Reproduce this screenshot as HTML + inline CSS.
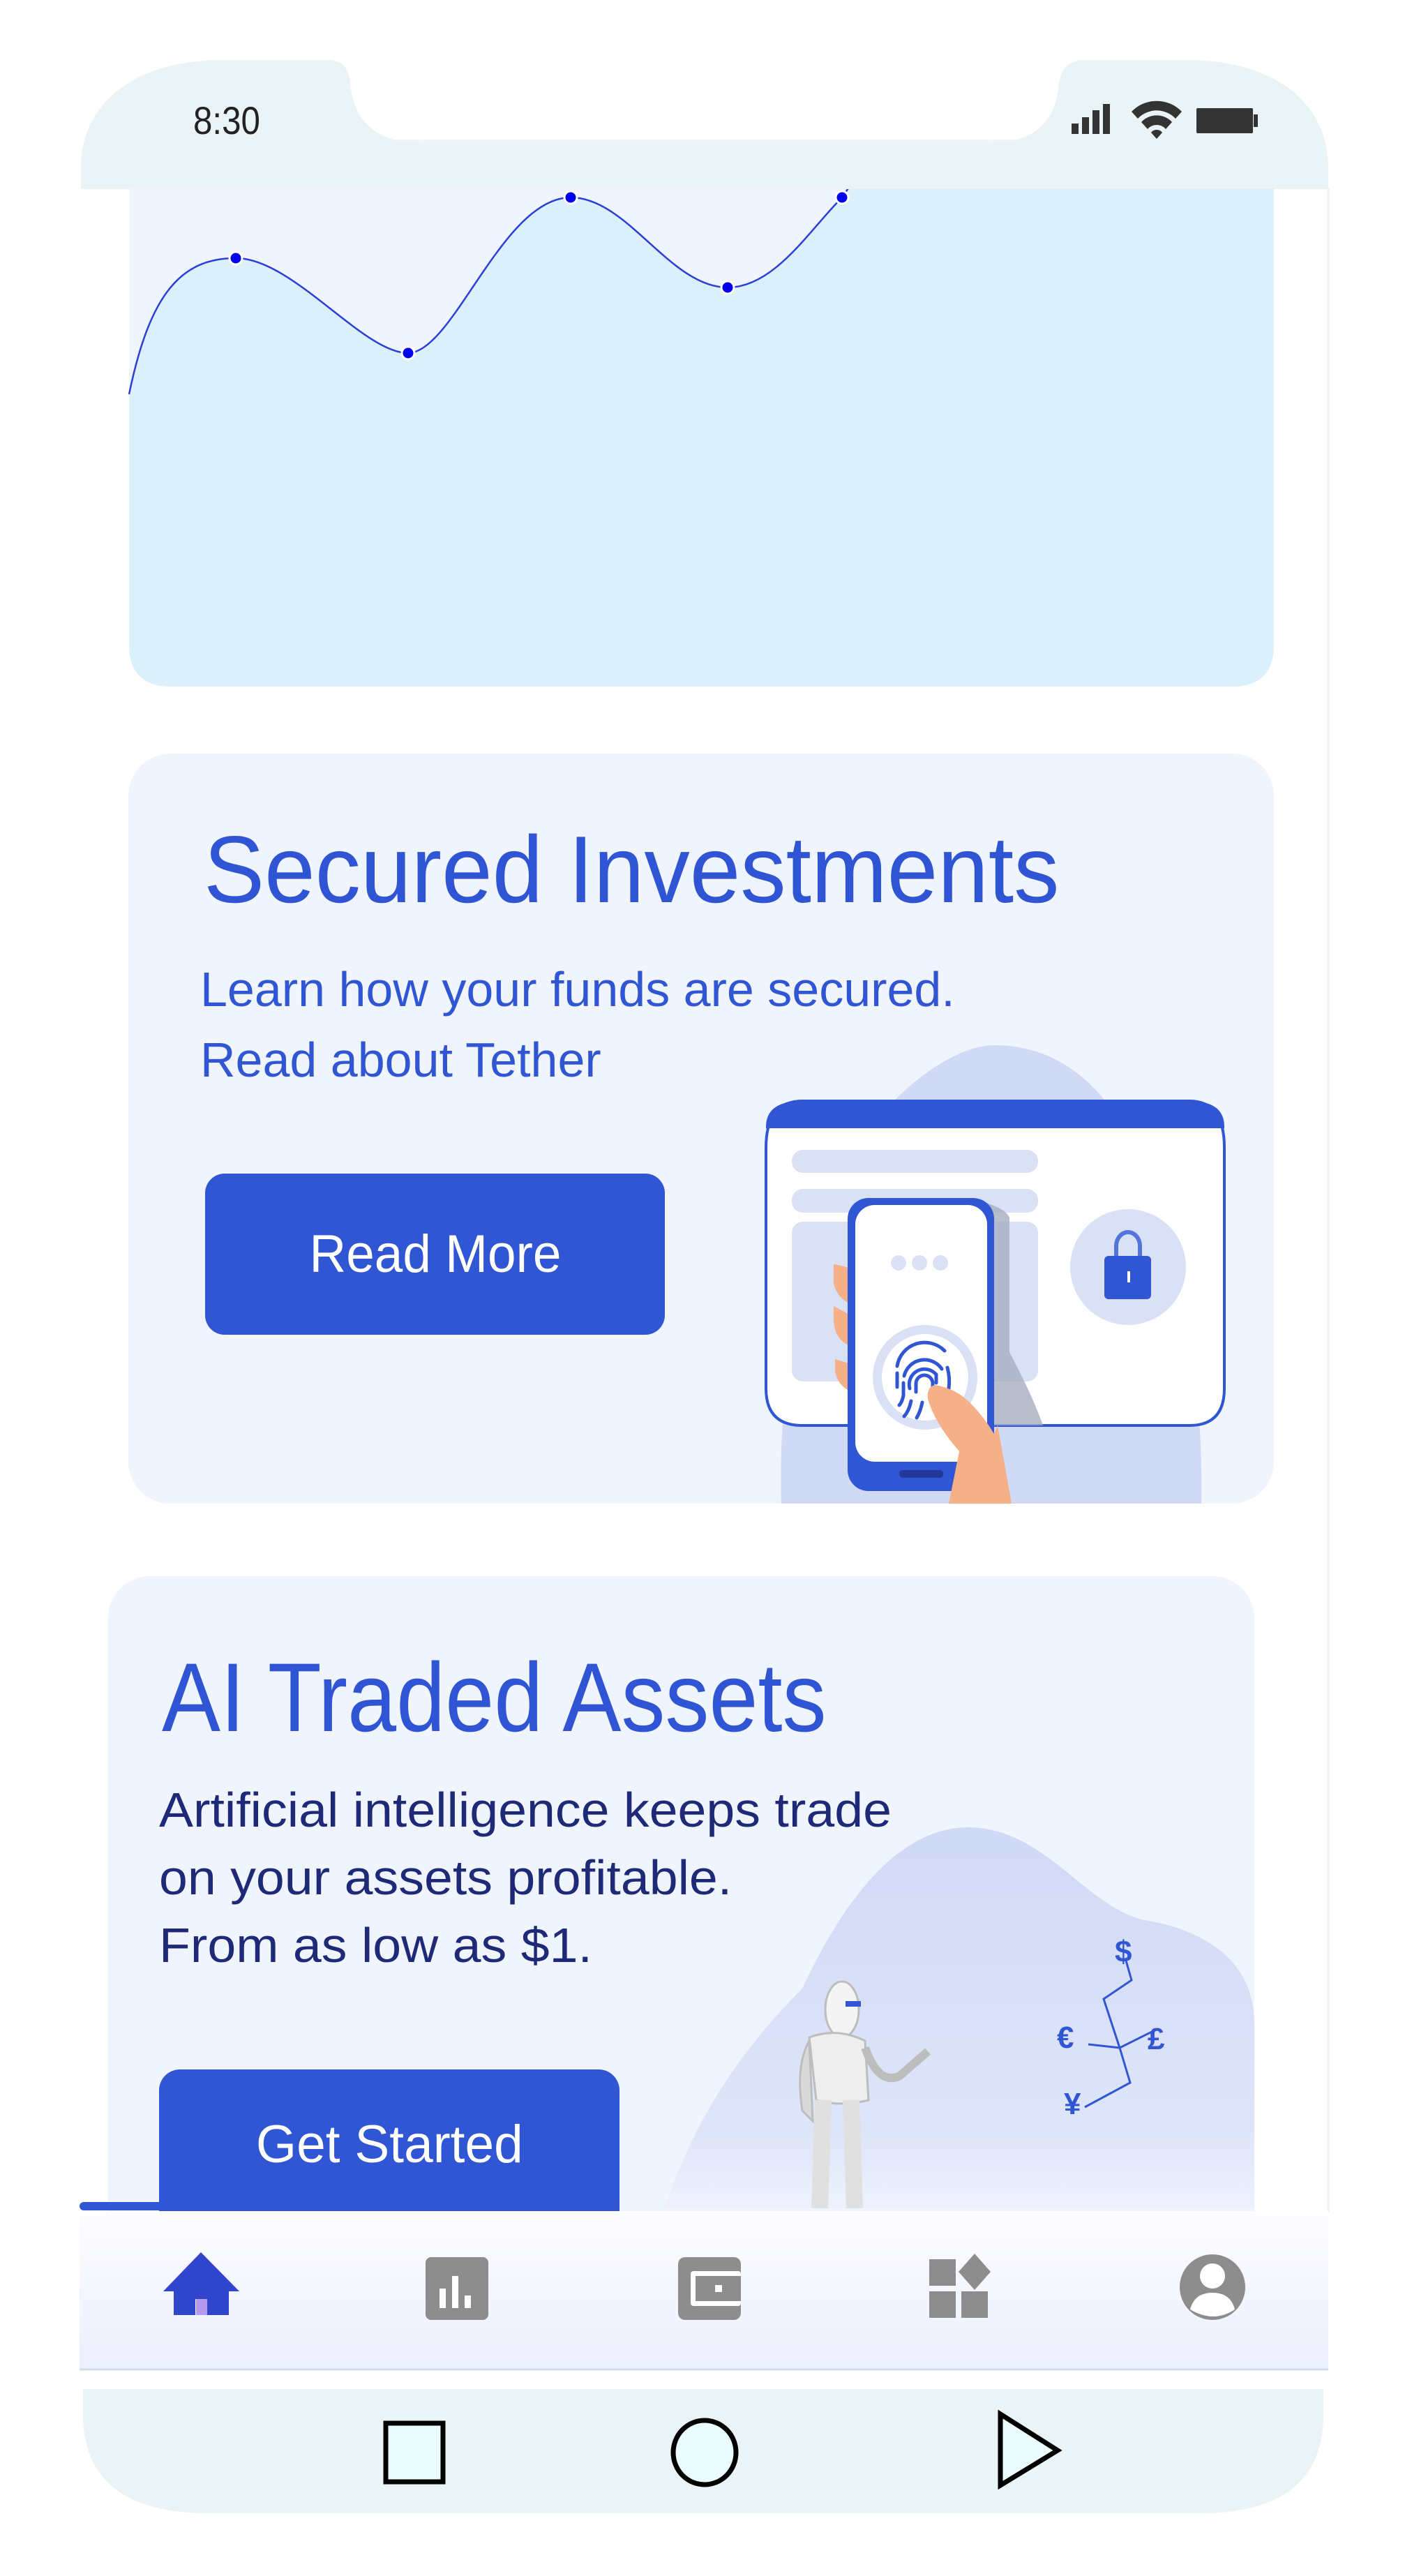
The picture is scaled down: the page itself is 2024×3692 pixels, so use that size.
<!DOCTYPE html>
<html><head><meta charset="utf-8"><style>
*{margin:0;padding:0;box-sizing:border-box}
body{width:2024px;height:3692px;background:#fff;position:relative;overflow:hidden;font-family:"Liberation Sans",sans-serif}
.t{position:absolute;white-space:nowrap;transform-origin:left top}
</style></head><body>
<svg width="2024" height="3692" style="position:absolute;left:0;top:0">
<defs>
<linearGradient id="nav" x1="0" y1="0" x2="0" y2="1"><stop offset="0" stop-color="#fdfdff"/><stop offset="1" stop-color="#eceffd"/></linearGradient>
<linearGradient id="blobg" x1="0" y1="0" x2="0" y2="1"><stop offset="0" stop-color="#d0d9f5"/><stop offset="0.8" stop-color="#dfe5f9"/><stop offset="1" stop-color="#eef1fc"/></linearGradient>
<clipPath id="c2"><rect x="184" y="1080" width="1642" height="1075" rx="60"/></clipPath>
<clipPath id="c3"><rect x="155" y="2259" width="1643" height="906"/></clipPath>
</defs>
<line x1="1904" y1="270" x2="1904" y2="3170" stroke="#eef1f5" stroke-width="3"/>
<path d="M185,200 H1826 V924 Q1826,984 1766,984 H245 Q185,984 185,924 Z" fill="#f0f4fd"/>
<path d="M185,565 C215,420 260,370 338,370 C420,370 520,506 585,506 C650,506 720,283 818,283 C900,283 960,412 1043,412 C1110,412 1160,330 1207,283 L1226,255 L1826,255 V924 Q1826,984 1766,984 H245 Q185,984 185,924 Z" fill="#dcf0fc"/>
<path d="M185,565 C215,420 260,370 338,370 C420,370 520,506 585,506 C650,506 720,283 818,283 C900,283 960,412 1043,412 C1110,412 1160,330 1207,283 L1226,255" fill="none" stroke="#2a3fd6" stroke-width="2.5"/>
<g fill="#0000f0" stroke="#fff" stroke-width="3"><circle cx="338" cy="370" r="9"/><circle cx="585" cy="506" r="9"/><circle cx="818" cy="283" r="9"/><circle cx="1043" cy="412" r="9"/><circle cx="1207" cy="283" r="9"/></g>
<path d="M116,271 L116,240 C116,150 190,86 320,86 L470,86 Q500,86 502,120 C508,180 545,207 620,207 L1400,207 C1480,207 1512,180 1518,120 Q1522,86 1555,86 L1700,86 C1830,86 1904,150 1904,240 L1904,271 Z" fill="#eaf3f6"/>
<g fill="#333">
<rect x="1536" y="177" width="10" height="15"/><rect x="1551" y="168" width="10" height="24"/><rect x="1566" y="158" width="10" height="34"/><rect x="1581" y="149" width="10" height="43"/>
<path d="M1622,160 a50,50 0 0,1 72,0 l-9,10 a37,37 0 0,0 -54,0 Z"/><path d="M1636,175 a30,30 0 0,1 44,0 l-9,10 a17,17 0 0,0 -26,0 Z"/><path d="M1650,190 a10,10 0 0,1 16,0 l-8,9 Z"/>
<rect x="1715" y="155" width="81" height="36" rx="2"/><rect x="1797" y="164" width="6" height="18"/>
</g>
<rect x="184" y="1080" width="1642" height="1075" rx="60" fill="#f0f4fd"/>
<g clip-path="url(#c2)">
<path d="M1120,2160 C1115,2000 1140,1760 1230,1640 C1300,1540 1380,1498 1425,1498 C1520,1498 1600,1560 1650,1700 C1700,1840 1725,1990 1722,2160 Z" fill="#d0daf5"/>
<path d="M1098,1645 Q1098,1578 1150,1578 H1705 Q1755,1578 1755,1645 V1990 Q1755,2043 1705,2043 H1150 Q1098,2043 1098,1990 Z" fill="#fff" stroke="#3056d3" stroke-width="4"/>
<path d="M1098,1617 V1615 Q1098,1578 1150,1578 H1705 Q1755,1578 1755,1615 V1617 Z" fill="#3056d3"/>
<rect x="1135" y="1648" width="353" height="33" rx="16" fill="#dbe1f5"/>
<rect x="1135" y="1704" width="353" height="34" rx="16" fill="#dbe1f5"/>
<rect x="1135" y="1751" width="353" height="229" rx="16" fill="#dbe1f5"/>
<circle cx="1617" cy="1816" r="83" fill="#dbe1f5"/>
<path d="M1600,1800 v-14 a17,20 0 0,1 34,0 v14" fill="none" stroke="#5474dd" stroke-width="6"/>
<rect x="1583" y="1800" width="67" height="62" rx="6" fill="#3056d3"/>
<rect x="1616" y="1822" width="4" height="16" fill="#fff"/>
<path d="M1400,1720 Q1440,1730 1447,1745 V1938 Q1480,2000 1495,2043 H1425 Z" fill="#a8aec0" opacity="0.8"/>
<path d="M1195,1812 Q1215,1815 1220,1820 V1870 Q1200,1860 1195,1840 Z M1195,1872 Q1210,1880 1220,1885 V1930 Q1195,1920 1195,1890 Z M1197,1948 Q1210,1952 1220,1955 V1995 Q1200,1985 1197,1965 Z" fill="#f5b088"/>
<rect x="1215" y="1717" width="210" height="420" rx="30" fill="#3056d3"/>
<rect x="1226" y="1727" width="189" height="368" rx="28" fill="#fff"/>
<rect x="1289" y="2107" width="63" height="11" rx="5" fill="#22399a"/>
<g fill="#dbe1f5"><circle cx="1288" cy="1810" r="11"/><circle cx="1318" cy="1810" r="11"/><circle cx="1348" cy="1810" r="11"/></g>
<circle cx="1326" cy="1974" r="75" fill="#dbe1f5"/><circle cx="1326" cy="1974" r="62" fill="#fff"/>
<g fill="none" stroke="#3056d3" stroke-width="5" stroke-linecap="round">
<path d="M1286,1958 a40,40 0 0,1 68,-22"/><path d="M1296,1972 a30,30 0 0,1 54,-10"/><path d="M1304,1990 a22,22 0 0,1 38,-20 v12"/><path d="M1313,1995 v-12 a12,12 0 0,1 24,0 v18"/><path d="M1286,1968 v20 M1295,1982 v18 q-2,10 -6,14"/><path d="M1342,1990 v16"/><path d="M1358,1960 q4,15 2,30"/><path d="M1306,2008 q-3,14 -10,22 M1322,2010 q-3,14 -8,22"/>
</g>
<path d="M1340,1985 Q1370,1990 1390,2010 Q1410,2030 1425,2055 L1430,2043 L1450,2155 H1360 L1375,2080 Q1340,2040 1330,2005 Q1328,1988 1340,1985 Z" fill="#f5b088"/>
</g>
<rect x="155" y="2259" width="1643" height="1000" rx="60" fill="#f0f4fd"/>
<g clip-path="url(#c3)">
<path d="M953,3165 C1000,3020 1080,2920 1150,2850 C1220,2700 1300,2619 1388,2619 C1500,2619 1560,2740 1647,2753 C1740,2770 1798,2820 1798,2900 V3165 Z" fill="url(#blobg)"/>
<g fill="#d9d9d9" stroke="#bdbdbd" stroke-width="3">
<ellipse cx="1207" cy="2880" rx="24" ry="40" fill="#f4f4f4"/>
<path d="M1160,2920 Q1200,2905 1240,2925 L1245,3010 Q1205,3020 1170,3010 Z" fill="#eee"/>
<path d="M1160,2925 Q1140,2960 1150,3025 L1165,3040 Z"/>
<path d="M1240,2935 Q1260,2990 1290,2975 L1330,2940" fill="none" stroke-width="12"/>
<path d="M1180,3010 L1175,3165 M1220,3010 L1225,3165" fill="none" stroke="#e0e0e0" stroke-width="24"/>
</g>
<rect x="1212" y="2868" width="22" height="8" fill="#3056d3"/>
<g fill="none" stroke="#3056d3" stroke-width="3"><path d="M1614,2810 L1622,2838 L1582,2865 L1605,2935 L1655,2910 M1605,2935 L1560,2930 M1605,2935 L1620,2985 L1555,3020"/></g>
<g fill="#3056d3" font-family="Liberation Sans,sans-serif" font-weight="bold" font-size="44">
<text x="1598" y="2812">$</text><text x="1515" y="2935">€</text><text x="1645" y="2937">£</text><text x="1525" y="3030">¥</text>
</g>
</g>
<rect x="228" y="2966" width="660" height="230" rx="30" fill="#3056d3"/>
<rect x="114" y="3156" width="120" height="12" rx="6" fill="#3056d3"/>
<rect x="114" y="3169" width="1790" height="226" fill="url(#nav)"/>
<line x1="114" y1="3396" x2="1904" y2="3396" stroke="#d6dae6" stroke-width="3"/>
<path d="M288,3228 L343,3284 H328 V3318 H297 V3295 H280 V3318 H249 V3284 H234 Z" fill="#2f45cc"/>
<rect x="281" y="3295" width="16" height="23" fill="#b59af0"/>
<rect x="610" y="3235" width="90" height="90" rx="8" fill="#8d8d8d"/>
<g fill="#fff"><rect x="630" y="3280" width="9" height="28"/><rect x="648" y="3262" width="9" height="46"/><rect x="666" y="3290" width="9" height="18"/></g>
<rect x="972" y="3235" width="90" height="90" rx="10" fill="#8d8d8d"/>
<rect x="990" y="3255" width="72" height="50" rx="4" fill="#fff"/><rect x="997" y="3262" width="65" height="36" fill="#8d8d8d"/><rect x="1025" y="3275" width="10" height="10" fill="#fff"/>
<g fill="#8d8d8d"><rect x="1332" y="3238" width="38" height="38"/><rect x="1332" y="3284" width="38" height="38"/><rect x="1378" y="3284" width="38" height="38"/><path d="M1397,3230 L1420,3256 L1397,3282 L1374,3256 Z"/></g>
<circle cx="1738" cy="3278" r="47" fill="#8d8d8d"/><circle cx="1738" cy="3262" r="18" fill="#fff"/><path d="M1706,3310 Q1712,3286 1738,3286 Q1764,3286 1770,3310 Q1740,3330 1706,3310 Z" fill="#fff"/>
<rect x="119" y="3402" width="1785" height="12" fill="#fff"/>
<path d="M119,3424 H1897 V3460 Q1897,3602 1720,3602 H300 Q119,3602 119,3460 Z" fill="#eaf3f6"/>
<rect x="553" y="3473" width="82" height="84" fill="#eafcfd" stroke="#000" stroke-width="7"/>
<ellipse cx="1010" cy="3515" rx="45" ry="46" fill="#eafcfd" stroke="#000" stroke-width="7"/>
<path d="M1434,3460 L1516,3512 L1434,3562 Z" fill="#eafcfd" stroke="#000" stroke-width="7" stroke-linejoin="miter"/>
</svg>
<div class="t" style="left:277px;top:140px;font-size:56px;color:#222;transform:scaleX(0.88)">8:30</div>
<div class="t" style="left:292px;top:1168px;font-size:136px;color:#2f55d4;transform:scaleX(0.96)">Secured Investments</div>
<div class="t" style="left:287px;top:1368px;font-size:70px;color:#3056d3;transform:scaleX(1.0);line-height:101px">Learn how your funds are secured.<br>Read about Tether</div>
<div style="position:absolute;left:294px;top:1682px;width:659px;height:231px;background:#3056d3;border-radius:28px;color:#fff;font-size:76px;text-align:center;line-height:231px"><span style="display:inline-block;transform:scaleX(0.96)">Read More</span></div>
<div class="t" style="left:232px;top:2352px;font-size:140px;color:#2f55d4;transform:scaleX(0.9)">AI Traded Assets</div>
<div class="t" style="left:228px;top:2546px;font-size:70px;color:#1e2a78;transform:scaleX(1.05);line-height:97px">Artificial intelligence keeps trade<br>on your assets profitable.<br>From as low as $1.</div>
<div style="position:absolute;left:228px;top:3030px;width:660px;text-align:center;font-size:76px;color:#fff;white-space:nowrap"><span style="display:inline-block;transform:scaleX(0.985)">Get Started</span></div>
</body></html>
